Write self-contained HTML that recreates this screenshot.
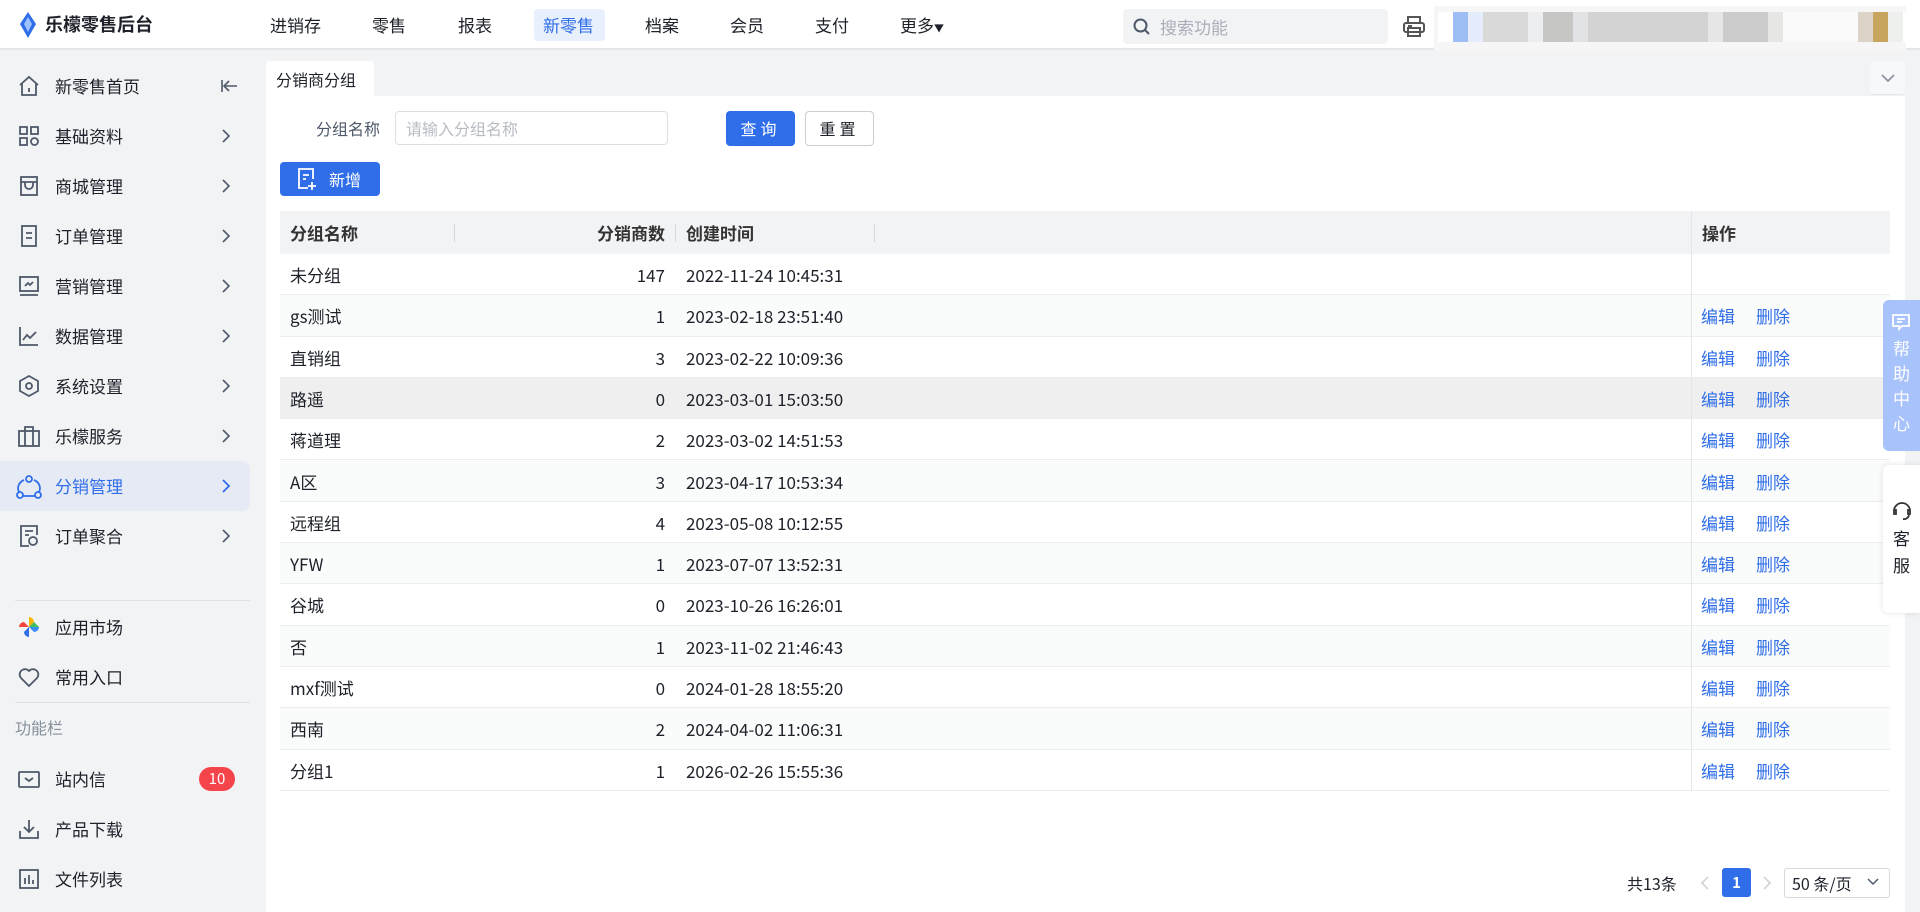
<!DOCTYPE html>
<html><head><meta charset="utf-8"><style>
*{margin:0;padding:0;box-sizing:border-box}
body{width:1920px;height:912px;overflow:hidden;background:#f2f3f5;font-family:"Noto Sans CJK SC","Liberation Sans",sans-serif;color:#1d2129;position:relative}
.abs{position:absolute}
.hdr{left:0;top:0;width:1920px;height:50px;background:#fff;border-bottom:2px solid #e5e6eb}
.nav{top:0;height:49px;line-height:49px;font-size:17px;color:#1d2129}
.side{left:0;top:50px;width:265px;height:862px;background:#f2f3f5}
.si{left:0;width:250px;height:50px;font-size:17px;line-height:50px}
.si .t{position:absolute;left:55px}
.si svg.ic{position:absolute;left:18px;top:14px}
.si .ch{position:absolute;left:220px;top:17px}
.panel{left:266px;top:96px;width:1639px;height:816px;background:#fff}
.row{left:280px;width:1610px;height:41.3px;border-bottom:1px solid #ebedf0;font-size:17px;line-height:41px}
.row span{position:absolute}
.blue{color:#2f6ee8}
</style></head><body>
<div class="abs hdr"></div>
<svg class="abs" style="left:18px;top:12px" width="20" height="26" viewBox="0 0 20 26"><path d="M10 0 L18 12 L10 26 L2 12 Z" fill="#2f6ee8"/><path d="M10 5 L14 12 L10 20 L6 12Z" fill="#9ec1ff"/></svg>
<div class="abs" style="left:45px;top:0;line-height:49px;font-size:18px;font-weight:bold">乐檬零售后台</div>
<div class="abs nav" style="left:270px">进销存</div>
<div class="abs nav" style="left:372px">零售</div>
<div class="abs nav" style="left:458px">报表</div>
<div class="abs" style="left:534px;top:9px;width:71px;height:32px;background:#e8effd;border-radius:4px"></div>
<div class="abs nav" style="left:543px;color:#2f6ee8">新零售</div>
<div class="abs nav" style="left:645px">档案</div>
<div class="abs nav" style="left:730px">会员</div>
<div class="abs nav" style="left:815px">支付</div>
<div class="abs nav" style="left:900px">更多<span style="font-size:10px">▼</span></div>
<div class="abs" style="left:1123px;top:9px;width:265px;height:35px;background:#f2f3f5;border-radius:4px"></div>
<svg class="abs" style="left:1132px;top:17px" width="20" height="20" viewBox="0 0 20 20"><circle cx="8.5" cy="8.5" r="6" stroke="#4e5969" stroke-width="2" fill="none"/><path d="M13 13L17 17" stroke="#4e5969" stroke-width="2"/></svg>
<div class="abs" style="left:1160px;top:9px;line-height:35px;font-size:17px;color:#a9aeb8">搜索功能</div>
<svg class="abs" style="left:1402px;top:15px" width="24" height="24" viewBox="0 0 24 24" fill="none" stroke="#555" stroke-width="2"><rect x="6" y="2" width="12" height="6"/><rect x="2" y="8" width="20" height="9" rx="2"/><rect x="6" y="13" width="12" height="8"/><path d="M6 11h4"/></svg>
<div class="abs" style="left:1434px;top:6px;width:472px;height:45px;background:#f6f6f6"></div>
<div class="abs" style="left:1438px;top:12px;width:470px;height:30px;background:linear-gradient(90deg,#fff 0 15px,#9fbdf5 15px 30px,#e5edfd 30px 45px,#d9d9d9 45px 90px,#eceef0 90px 105px,#c6c6c4 105px 135px,#e2e3e5 135px 150px,#d3d3d3 150px 270px,#e6e6e6 270px 285px,#cbcbcb 285px 330px,#e6e6e4 330px 345px,#fafafa 345px 420px,#dcd4c8 420px 435px,#c7a55e 435px 450px,#eef0ee 450px 465px,#fff 465px)"></div>
<div class="abs side"></div>
<div class="abs" style="left:0;top:461px;width:250px;height:50px;background:#e6eaf5;border-radius:0 8px 8px 0"></div>
<div class="abs si" style="top:61px"><svg class="ic" width="22" height="22" viewBox="0 0 22 22" fill="none" stroke="#4e5969" stroke-width="1.8"><path d="M2 10L11 2l9 8M4 8v12h14V8M11 13v4"/></svg><span class="t">新零售首页</span><svg class="ch" width="18" height="16" viewBox="0 0 18 16" fill="none" stroke="#4e5969" stroke-width="1.6"><path d="M16 8H4M8 3L3 8l5 5M1 2v12" transform="translate(1 0)"/></svg></div>
<div class="abs si" style="top:111px"><svg class="ic" width="22" height="22" viewBox="0 0 22 22" fill="none" stroke="#4e5969" stroke-width="1.8"><rect x="2" y="2" width="7" height="7"/><rect x="13" y="2" width="7" height="7"/><rect x="2" y="13" width="7" height="7"/><circle cx="16.5" cy="16.5" r="3.5"/></svg><span class="t">基础资料</span><svg class="ch" width="12" height="16" viewBox="0 0 12 16"><path d="M3 2l6 6-6 6" stroke="#4e5969" stroke-width="1.6" fill="none"/></svg></div>
<div class="abs si" style="top:161px"><svg class="ic" width="22" height="22" viewBox="0 0 22 22" fill="none" stroke="#4e5969" stroke-width="1.8"><rect x="3" y="2" width="16" height="18"/><path d="M3 7h16M7 7v3a4 4 0 0 0 8 0V7"/></svg><span class="t">商城管理</span><svg class="ch" width="12" height="16" viewBox="0 0 12 16"><path d="M3 2l6 6-6 6" stroke="#4e5969" stroke-width="1.6" fill="none"/></svg></div>
<div class="abs si" style="top:211px"><svg class="ic" width="22" height="22" viewBox="0 0 22 22" fill="none" stroke="#4e5969" stroke-width="1.8"><rect x="4" y="1" width="14" height="20"/><path d="M8 8h6M8 13h6"/></svg><span class="t">订单管理</span><svg class="ch" width="12" height="16" viewBox="0 0 12 16"><path d="M3 2l6 6-6 6" stroke="#4e5969" stroke-width="1.6" fill="none"/></svg></div>
<div class="abs si" style="top:261px"><svg class="ic" width="22" height="22" viewBox="0 0 22 22" fill="none" stroke="#4e5969" stroke-width="1.8"><rect x="2" y="2" width="18" height="14"/><path d="M2 20h18M7 11l3-3 2 2 3-3"/></svg><span class="t">营销管理</span><svg class="ch" width="12" height="16" viewBox="0 0 12 16"><path d="M3 2l6 6-6 6" stroke="#4e5969" stroke-width="1.6" fill="none"/></svg></div>
<div class="abs si" style="top:311px"><svg class="ic" width="22" height="22" viewBox="0 0 22 22" fill="none" stroke="#4e5969" stroke-width="1.8"><path d="M2 2v18h18M5 15l4-5 3 3 6-6"/></svg><span class="t">数据管理</span><svg class="ch" width="12" height="16" viewBox="0 0 12 16"><path d="M3 2l6 6-6 6" stroke="#4e5969" stroke-width="1.6" fill="none"/></svg></div>
<div class="abs si" style="top:361px"><svg class="ic" width="22" height="22" viewBox="0 0 22 22" fill="none" stroke="#4e5969" stroke-width="1.8"><path d="M11 1l9 5v10l-9 5-9-5V6z"/><circle cx="11" cy="11" r="3"/></svg><span class="t">系统设置</span><svg class="ch" width="12" height="16" viewBox="0 0 12 16"><path d="M3 2l6 6-6 6" stroke="#4e5969" stroke-width="1.6" fill="none"/></svg></div>
<div class="abs si" style="top:411px"><svg class="ic" width="22" height="22" viewBox="0 0 22 22" fill="none" stroke="#4e5969" stroke-width="1.8"><rect x="1" y="6" width="20" height="15"/><path d="M7 6V2h8v4M7 6v15M15 6v15"/></svg><span class="t">乐檬服务</span><svg class="ch" width="12" height="16" viewBox="0 0 12 16"><path d="M3 2l6 6-6 6" stroke="#4e5969" stroke-width="1.6" fill="none"/></svg></div>
<div class="abs si" style="top:461px;color:#2f6ee8"><svg class="ic" width="26" height="24" viewBox="0 0 26 24" fill="none" stroke="#2f6ee8" stroke-width="1.8" style="left:16px"><path d="M8 5a10 9 0 0 0-5 12M18 5a10 9 0 0 1 5 12M6 21h14"/><circle cx="13" cy="4" r="3"/><circle cx="4" cy="20" r="3"/><circle cx="22" cy="20" r="3"/></svg><span class="t">分销管理</span><svg class="ch" width="12" height="16" viewBox="0 0 12 16"><path d="M3 2l6 6-6 6" stroke="#2f6ee8" stroke-width="1.8" fill="none"/></svg></div>
<div class="abs si" style="top:511px"><svg class="ic" width="22" height="22" viewBox="0 0 22 22" fill="none" stroke="#4e5969" stroke-width="1.8"><path d="M11 21H3V1h16v9M7 6h8M7 10h4"/><circle cx="15" cy="16" r="4"/></svg><span class="t">订单聚合</span><svg class="ch" width="12" height="16" viewBox="0 0 12 16"><path d="M3 2l6 6-6 6" stroke="#4e5969" stroke-width="1.6" fill="none"/></svg></div>
<div class="abs" style="left:15px;top:600px;width:235px;border-top:1px solid #dfe1e5"></div>
<div class="abs si" style="top:602px"><svg class="ic" width="22" height="22" viewBox="0 0 22 22"><path d="M11 11V1a5 5 0 0 1 5 5z" fill="#f7b500"/><path d="M11 11h10a5 5 0 0 1-5 5z" fill="#3a8cf6"/><path d="M11 11v10a5 5 0 0 1-5-5z" fill="#2f6ee8"/><path d="M11 11H1a5 5 0 0 1 5-5z" fill="#f5453d"/><path d="M11 11l5-5 5 5z" fill="#41c05a"/></svg><span class="t">应用市场</span></div>
<div class="abs si" style="top:652px"><svg class="ic" width="22" height="22" viewBox="0 0 22 22" fill="none" stroke="#4e5969" stroke-width="1.8"><path d="M11 20L3 12a5 5 0 0 1 8-7 5 5 0 0 1 8 7z"/></svg><span class="t">常用入口</span></div>
<div class="abs" style="left:15px;top:702px;width:235px;border-top:1px solid #dfe1e5"></div>
<div class="abs" style="left:15px;top:715px;font-size:16px;color:#86909c">功能栏</div>
<div class="abs si" style="top:754px"><svg class="ic" width="22" height="22" viewBox="0 0 22 22" fill="none" stroke="#4e5969" stroke-width="1.8"><rect x="1" y="4" width="20" height="15" rx="1"/><path d="M7 10l4 3 4-3"/></svg><span class="t">站内信</span><div style="position:absolute;left:199px;top:13px;width:36px;height:24px;border-radius:12px;background:#f5454a;color:#fff;font-size:15px;line-height:24px;text-align:center">10</div></div>
<div class="abs si" style="top:804px"><svg class="ic" width="22" height="22" viewBox="0 0 22 22" fill="none" stroke="#4e5969" stroke-width="1.8"><path d="M2 13v7h18v-7M11 2v12M6 9l5 5 5-5"/></svg><span class="t">产品下载</span></div>
<div class="abs si" style="top:854px"><svg class="ic" width="22" height="22" viewBox="0 0 22 22" fill="none" stroke="#4e5969" stroke-width="1.8"><rect x="2" y="2" width="18" height="18"/><path d="M7 10v6M11 7v9M15 12v4"/></svg><span class="t">文件列表</span></div>

<div class="abs" style="left:266px;top:61px;width:108px;height:36px;background:#fff;border-radius:4px 4px 0 0"></div>
<div class="abs" style="left:276px;top:61px;line-height:36px;font-size:16px">分销商分组</div>
<div class="abs" style="left:1870px;top:61px;width:35px;height:34px;background:#f7f8fa;border-radius:4px;border-bottom:1px solid #e5e6eb"></div>
<svg class="abs" style="left:1880px;top:72px" width="16" height="12" viewBox="0 0 16 12"><path d="M2 3l6 6 6-6" stroke="#86909c" stroke-width="1.6" fill="none"/></svg>
<div class="abs panel"></div>
<div class="abs" style="left:316px;top:111px;line-height:34px;font-size:16px;color:#4e5969">分组名称</div>
<div class="abs" style="left:395px;top:111px;width:273px;height:34px;border:1px solid #dcdfe6;border-radius:4px;font-size:16px;line-height:32px;padding-left:10px;color:#b7bbc2">请输入分组名称</div>
<div class="abs" style="left:726px;top:111px;width:69px;height:35px;background:#2f6ee8;border-radius:4px;color:#fff;font-size:16px;line-height:35px;text-align:center;letter-spacing:4px">查询</div>
<div class="abs" style="left:805px;top:111px;width:69px;height:35px;border:1px solid #c9cdd4;border-radius:4px;font-size:16px;line-height:33px;text-align:center;letter-spacing:4px">重置</div>
<div class="abs" style="left:280px;top:162px;width:100px;height:34px;background:#2f6ee8;border-radius:4px"></div>
<svg class="abs" style="left:296px;top:167px" width="22" height="24" viewBox="0 0 22 24" fill="none" stroke="#fff" stroke-width="1.8"><path d="M12 21H3V2h14v10M7 8h6M7 12h3M16 15v8M12 19h8"/></svg>
<div class="abs" style="left:329px;top:162px;line-height:34px;font-size:16px;color:#fff">新增</div>

<div class="abs" style="left:280px;top:211px;width:1610px;height:43px;background:#f2f3f5"></div>
<div class="abs" style="left:454px;top:224px;height:18px;border-left:1px solid #d5d8de"></div>
<div class="abs" style="left:675px;top:224px;height:18px;border-left:1px solid #d5d8de"></div>
<div class="abs" style="left:874px;top:224px;height:18px;border-left:1px solid #d5d8de"></div>
<div class="abs" style="left:280px;top:211px;line-height:43px;font-size:17px;font-weight:bold;color:#333;padding-left:10px">分组名称</div>
<div class="abs" style="left:560px;width:105px;text-align:right;top:211px;line-height:43px;font-size:17px;font-weight:bold;color:#333">分销商数</div>
<div class="abs" style="left:686px;top:211px;line-height:43px;font-size:17px;font-weight:bold;color:#333">创建时间</div>
<div class="abs" style="left:1702px;top:211px;line-height:43px;font-size:17px;font-weight:bold;color:#333">操作</div>

<div class="abs row" style="top:254px"><span style="left:10px">未分组</span><span style="right:1225px">147</span><span style="left:406px">2022-11-24 10:45:31</span></div>
<div class="abs row" style="top:295.3px;background:#fafbfb"><span style="left:10px">gs测试</span><span style="right:1225px">1</span><span style="left:406px">2023-02-18 23:51:40</span><span class="blue" style="left:1421px">编辑</span><span class="blue" style="left:1476px">删除</span></div>
<div class="abs row" style="top:336.6px"><span style="left:10px">直销组</span><span style="right:1225px">3</span><span style="left:406px">2023-02-22 10:09:36</span><span class="blue" style="left:1421px">编辑</span><span class="blue" style="left:1476px">删除</span></div>
<div class="abs row" style="top:377.9px;background:#efefef"><span style="left:10px">路遥</span><span style="right:1225px">0</span><span style="left:406px">2023-03-01 15:03:50</span><span class="blue" style="left:1421px">编辑</span><span class="blue" style="left:1476px">删除</span></div>
<div class="abs row" style="top:419.2px"><span style="left:10px">蒋道理</span><span style="right:1225px">2</span><span style="left:406px">2023-03-02 14:51:53</span><span class="blue" style="left:1421px">编辑</span><span class="blue" style="left:1476px">删除</span></div>
<div class="abs row" style="top:460.5px;background:#fafbfb"><span style="left:10px">A区</span><span style="right:1225px">3</span><span style="left:406px">2023-04-17 10:53:34</span><span class="blue" style="left:1421px">编辑</span><span class="blue" style="left:1476px">删除</span></div>
<div class="abs row" style="top:501.8px"><span style="left:10px">远程组</span><span style="right:1225px">4</span><span style="left:406px">2023-05-08 10:12:55</span><span class="blue" style="left:1421px">编辑</span><span class="blue" style="left:1476px">删除</span></div>
<div class="abs row" style="top:543.1px;background:#fafbfb"><span style="left:10px">YFW</span><span style="right:1225px">1</span><span style="left:406px">2023-07-07 13:52:31</span><span class="blue" style="left:1421px">编辑</span><span class="blue" style="left:1476px">删除</span></div>
<div class="abs row" style="top:584.4px"><span style="left:10px">谷城</span><span style="right:1225px">0</span><span style="left:406px">2023-10-26 16:26:01</span><span class="blue" style="left:1421px">编辑</span><span class="blue" style="left:1476px">删除</span></div>
<div class="abs row" style="top:625.7px;background:#fafbfb"><span style="left:10px">否</span><span style="right:1225px">1</span><span style="left:406px">2023-11-02 21:46:43</span><span class="blue" style="left:1421px">编辑</span><span class="blue" style="left:1476px">删除</span></div>
<div class="abs row" style="top:667px"><span style="left:10px">mxf测试</span><span style="right:1225px">0</span><span style="left:406px">2024-01-28 18:55:20</span><span class="blue" style="left:1421px">编辑</span><span class="blue" style="left:1476px">删除</span></div>
<div class="abs row" style="top:708.3px;background:#fafbfb"><span style="left:10px">西南</span><span style="right:1225px">2</span><span style="left:406px">2024-04-02 11:06:31</span><span class="blue" style="left:1421px">编辑</span><span class="blue" style="left:1476px">删除</span></div>
<div class="abs row" style="top:749.6px"><span style="left:10px">分组1</span><span style="right:1225px">1</span><span style="left:406px">2026-02-26 15:55:36</span><span class="blue" style="left:1421px">编辑</span><span class="blue" style="left:1476px">删除</span></div>
<div class="abs" style="left:1691px;top:211px;height:579px;border-left:1px solid #e5e6eb"></div>

<div class="abs" style="left:1627px;top:868px;line-height:30px;font-size:16px">共13条</div>
<svg class="abs" style="left:1700px;top:876px" width="10" height="14" viewBox="0 0 10 14"><path d="M8 1L2 7l6 6" stroke="#c9cdd4" stroke-width="1.5" fill="none"/></svg>
<div class="abs" style="left:1722px;top:868px;width:29px;height:29px;background:#2f6ee8;border-radius:3px;color:#fff;font-size:15px;font-weight:bold;line-height:29px;text-align:center">1</div>
<svg class="abs" style="left:1762px;top:876px" width="10" height="14" viewBox="0 0 10 14"><path d="M2 1l6 6-6 6" stroke="#c9cdd4" stroke-width="1.5" fill="none"/></svg>
<div class="abs" style="left:1784px;top:868px;width:106px;height:30px;border:1px solid #d5d8de;border-radius:3px;font-size:16px;line-height:28px;padding-left:7px">50 条/页</div>
<svg class="abs" style="left:1866px;top:877px" width="14" height="10" viewBox="0 0 14 10"><path d="M2 2l5 5 5-5" stroke="#4e5969" stroke-width="1.5" fill="none"/></svg>

<div class="abs" style="left:1883px;top:300px;width:37px;height:151px;background:#a8c2fb;border-radius:6px 0 0 6px"></div>
<svg class="abs" style="left:1891px;top:312px" width="20" height="20" viewBox="0 0 20 20" fill="none" stroke="#fff" stroke-width="1.8"><path d="M2 3h16v11H11l-3 3v-3H2z"/><path d="M6 7h8M6 10h5"/></svg>
<div class="abs" style="left:1883px;top:335px;width:37px;text-align:center;font-size:17px;line-height:25px;color:#fff">帮<br>助<br>中<br>心</div>
<div class="abs" style="left:1883px;top:465px;width:37px;height:148px;background:#fff;border-radius:6px 0 0 6px;box-shadow:0 0 6px rgba(0,0,0,.12)"></div>
<svg class="abs" style="left:1891px;top:500px" width="22" height="22" viewBox="0 0 22 22" fill="none" stroke="#333" stroke-width="1.8"><path d="M3 11a8 8 0 0 1 16 0M3 10v4h2v-4zM17 10v4h2v-4zM18 15a5 5 0 0 1-6 4"/></svg>
<div class="abs" style="left:1883px;top:524px;width:37px;text-align:center;font-size:17px;line-height:27px;color:#1d2129">客<br>服</div>
</body></html>
